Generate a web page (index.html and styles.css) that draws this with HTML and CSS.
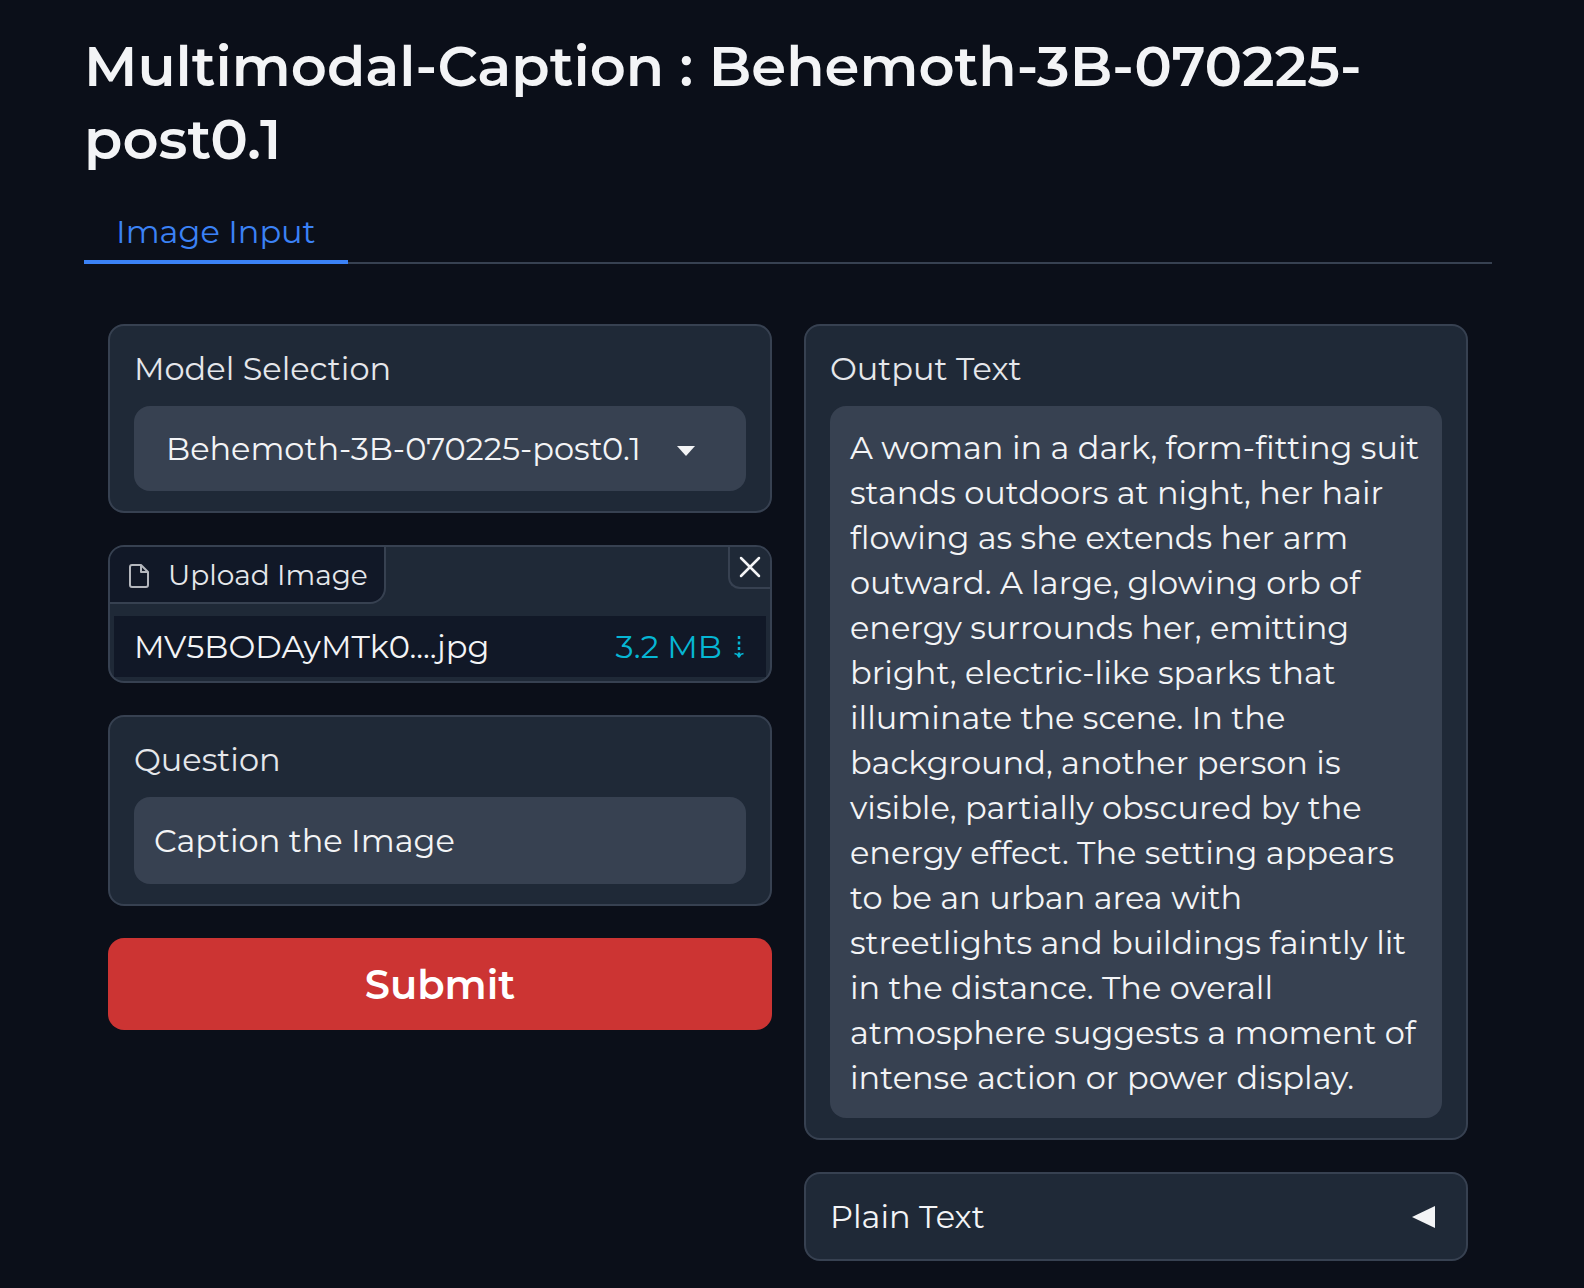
FILE: index.html
```html
<!DOCTYPE html>
<html lang="en">
<head>
  <meta charset="UTF-8" />
  <meta name="viewport" content="width=device-width, initial-scale=1.0"/>
  <title>Multimodal-Caption : Behemoth-3B-070225-post0.1</title>
  <link rel="stylesheet" href="styles.css">
</head>
<body>

  <main class="app">
    <h1>Multimodal-Caption : Behemoth-3B-070225-post0.1</h1>

    <div class="tabs" role="tablist">
      <button class="tab selected" type="button" role="tab" aria-selected="true">Image Input</button>
    </div>

    <form class="panels">
      <div class="column">

        <div class="card">
          <label class="title" for="model">Model Selection</label>
          <div class="select-wrap">
            <select class="field" id="model">
              <option>Behemoth-3B-070225-post0.1</option>
            </select>
            <svg class="caret" width="18" height="10" viewBox="0 0 18 10"><path d="M0 0h18L9 10z" fill="currentColor"/></svg>
          </div>
        </div>

        <div class="card upload">
          <div class="upload-head">
            <span class="upload-label">
              <svg width="24" height="26" viewBox="0 0 24 26" fill="none" stroke="currentColor" stroke-width="2" stroke-linejoin="round"><path d="M13 2H4a2 2 0 0 0-2 2v18a2 2 0 0 0 2 2h14a2 2 0 0 0 2-2V9l-7-7v7h7"/></svg>
              Upload Image
            </span>
            <button class="clear" type="button" aria-label="Clear">
              <svg width="22" height="22" viewBox="0 0 22 22" stroke="currentColor" stroke-width="2.5" stroke-linecap="round"><path d="M2 2l18 18M20 2L2 20"/></svg>
            </button>
          </div>
          <div class="file">
            <span>MV5BODAyMTk0....jpg</span>
            <a href="#">3.2 MB
              <svg width="10" height="24" viewBox="0 0 10 24" fill="none" stroke="currentColor"><path d="M5 1v3M5 6.500v3M5 12v3M5 17.500v4" stroke-width="2.500"/><path d="M.5 18.500l2.500.8L5 22l2-2.700 2.500-.8" stroke-width="1.500"/></svg>
            </a>
          </div>
        </div>

        <div class="card">
          <label class="title" for="question">Question</label>
          <input class="field" id="question" type="text" value="Caption the Image">
        </div>

        <button class="submit" type="button">Submit</button>
      </div>

      <div class="column">
        <div class="card">
          <label class="title" for="output">Output Text</label>
          <textarea class="field" id="output" rows="15" readonly>A woman in a dark, form-fitting suit
stands outdoors at night, her hair
flowing as she extends her arm
outward. A large, glowing orb of
energy surrounds her, emitting
bright, electric-like sparks that
illuminate the scene. In the
background, another person is
visible, partially obscured by the
energy effect. The setting appears
to be an urban area with
streetlights and buildings faintly lit
in the distance. The overall
atmosphere suggests a moment of
intense action or power display.</textarea>
        </div>

        <button class="card accordion" type="button" aria-expanded="false">
          <span>Plain Text</span>
          <svg width="24" height="24" viewBox="0 0 24 24"><path d="M24 1v22L1 12z" fill="currentColor"/></svg>
        </button>
      </div>
    </form>
  </main>

</body>
</html>
```

FILE: styles.css
```css
* {
  box-sizing: border-box;
}
body {
  margin: 0;
  background: #0b0f19;
  color: #f3f4f6;
  font-family: Montserrat, Inter, sans-serif;
  font-size: 32px;
  line-height: 45px;
}
button, input, select, textarea {
  font: inherit;
  color: inherit;
  margin: 0;
}
svg {
  display: block;
  flex: none;
}
.app {
  padding: 30px 92px 24px 84px;
}
h1 {
  margin: 0;
  font-size: 56px;
  line-height: 73px;
  font-weight: 600;
}
.tabs {
  display: flex;
  margin-top: 24px;
  box-shadow: inset 0 -2px #374151;
}
.tab {
  height: 64px;
  padding: 2px 32px 0;
  border: 0;
  border-bottom: 4px solid transparent;
  background: none;
}
.tab.selected {
  color: #3b82f6;
  border-color: #3b82f6;
}
.panels {
  display: grid;
  grid-template-columns: 1fr 1fr;
  gap: 32px;
  align-items: start;
  padding: 60px 24px 0;
}
.column {
  display: flex;
  flex-direction: column;
  gap: 32px;
  min-width: 0;
}
.card {
  padding: 20px 24px;
  border: 2px solid #374151;
  border-radius: 16px;
  background: #1f2937;
}
.title {
  display: block;
  margin-bottom: 14px;
  line-height: 46px;
  color: #e5e7eb;
}
.field {
  display: block;
  width: 100%;
  border: 0;
  border-radius: 16px;
  background: #374151;
  outline: none;
}
.select-wrap {
  position: relative;
}
select.field {
  height: 85px;
  padding: 0 72px 0 32px;
  appearance: none;
}
.caret {
  position: absolute;
  top: 40px;
  right: 51px;
  pointer-events: none;
}
input.field {
  height: 87px;
  padding: 0 20px;
}
textarea.field {
  padding: 19px 20px 18px;
  resize: none;
  overflow: hidden;
}

/* file upload */
.upload {
  padding: 0;
  overflow: hidden;
}
.upload-head {
  display: flex;
  justify-content: space-between;
  align-items: flex-start;
}
.upload-label {
  display: flex;
  align-items: center;
  gap: 16px;
  height: 57px;
  padding: 2px 16px 0 18px;
  border: solid #374151;
  border-width: 0 2px 2px 0;
  border-bottom-right-radius: 16px;
  background: #111827;
  color: #e5e7eb;
  font-size: 28px;
}
.upload-label svg {
  color: #b4b7bd;
}
.clear {
  display: grid;
  place-items: center;
  width: 42px;
  height: 42px;
  padding: 0;
  border: solid #374151;
  border-width: 0 0 2px 2px;
  border-bottom-left-radius: 12px;
  background: #1f2937;
}
.file {
  display: flex;
  justify-content: space-between;
  align-items: center;
  height: 61px;
  margin: 12px 4px 4px;
  padding: 0 22px 0 20px;
  background: #111827;
}
.file a {
  display: flex;
  align-items: center;
  gap: 12px;
  color: #06b6d4;
  text-decoration: none;
}

.submit {
  height: 92px;
  border: 0;
  border-radius: 16px;
  background: #cc3433;
  color: #fff;
  font-size: 40px;
  font-weight: 600;
}
.accordion {
  display: flex;
  justify-content: space-between;
  align-items: center;
  padding-right: 31px;
}
```
